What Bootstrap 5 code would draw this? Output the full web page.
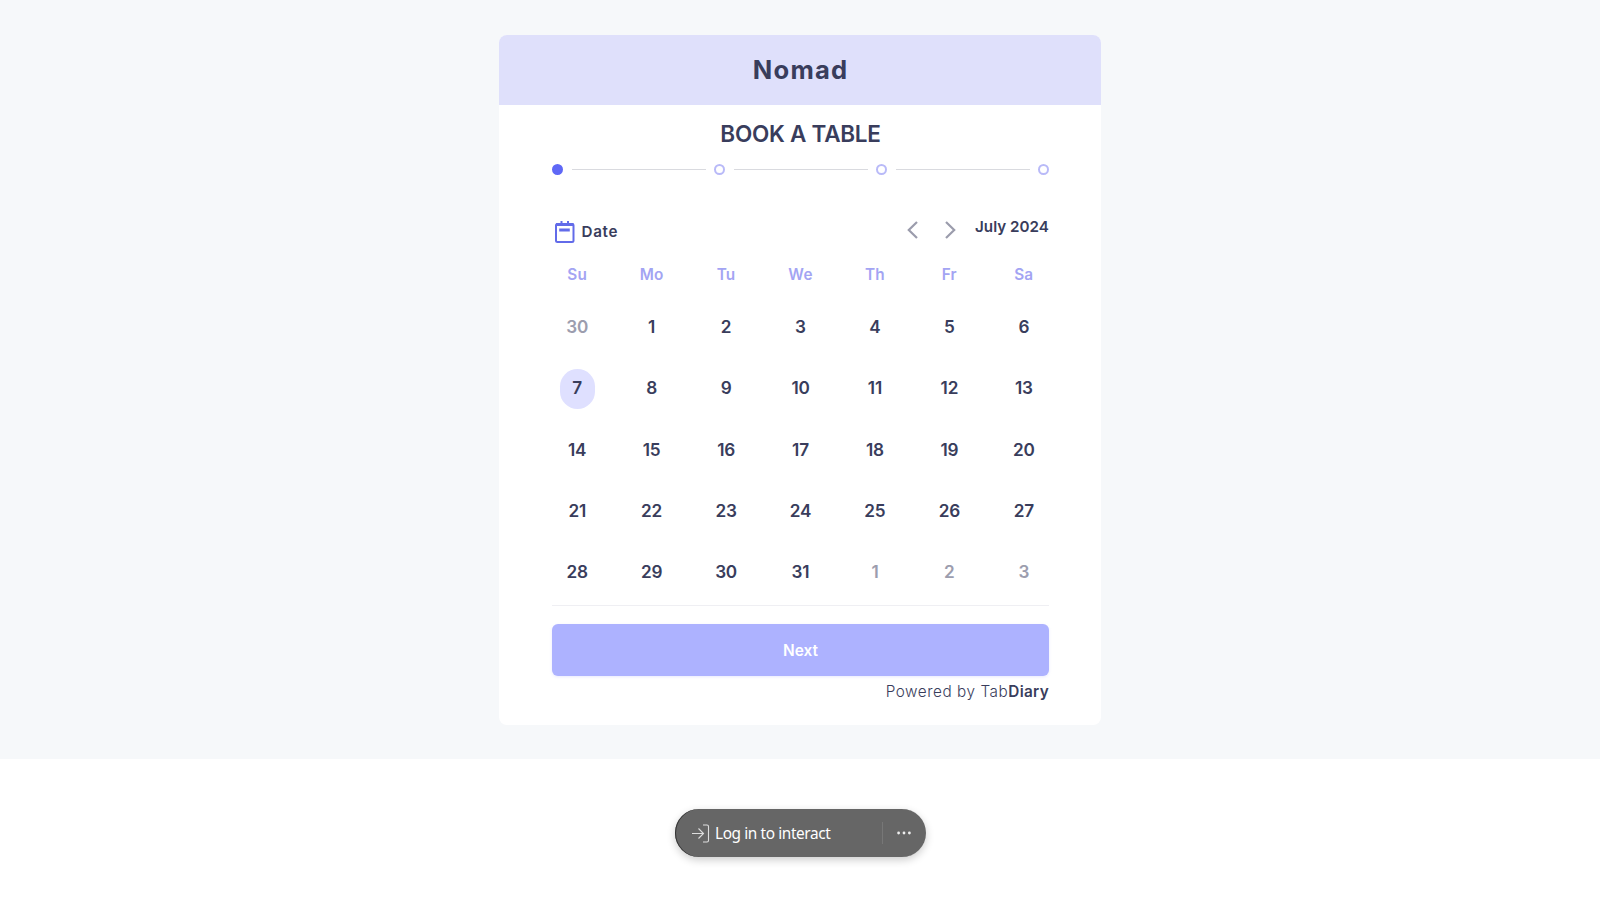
<!DOCTYPE html>
<html lang="en">
<head>
<meta charset="utf-8">
<title>Nomad - Book a table</title>
<link href="https://cdn.jsdelivr.net/npm/bootstrap@5.3.0/dist/css/bootstrap.min.css" rel="stylesheet">
<style>
body{font-family:Inter,"Open Sans",sans-serif;color:#393d5c;height:900px;overflow:hidden;background:#fff}
.stage{height:759px;background:#f6f8fa;padding-top:35px}
.booking{width:602px;height:690px;border-radius:8px;overflow:hidden}
.brand-head{height:70px;background:#dfe0fb;font-size:25.6px;font-weight:700;line-height:70px;letter-spacing:1.2px;text-indent:1.2px}
.inner{padding:0 52px 0 53px}
.title{font-size:22.5px;font-weight:600;line-height:30px;margin-top:14px;letter-spacing:-.25px}
.steps{height:12px;margin-top:14px;gap:8.5px}
.dot{width:11px;height:11px;border:2px solid #b9baf8;border-radius:50%;flex:none}
.dot.on{background:#5f68f6;border-color:#5f68f6}
.bar{height:1px;background:#d9dadf;flex:1}
.tools{height:52px;margin-top:42px;font-size:15.2px;font-weight:600}
.date-icon{margin:4px 0 0 2px}
.date-label{margin-left:6.5px;line-height:20px;padding-top:5px;letter-spacing:.7px}
.arrows{margin:4px 19px 0 0}
.month{line-height:20px;letter-spacing:.02px}
.cal{display:grid;grid-template-columns:repeat(7,1fr);margin:0 -12px 0 -12px;text-align:center}
.cal-head{color:#a3a4f3;font-size:15.3px;font-weight:600;line-height:20px;margin-top:-4px;letter-spacing:.2px}
.days{font-size:17.2px;font-weight:600;margin-top:11.4px;grid-auto-rows:61.25px;letter-spacing:-.2px}
.days span{display:flex;align-items:center;justify-content:center}
.days .out{color:#9c9dae}
.days i{font-style:normal;width:35px;height:40px;border-radius:18px;line-height:38px;background:#dfe0ff;margin-top:2px}
.rule{height:1px;background:#efeff3;margin-top:2.6px}
.next{height:52px;margin-top:18px;padding-top:2px;background:#adb2ff;color:#fff;border-radius:6px;font-size:15.4px;font-weight:600;border:0;box-shadow:0 1px 3px #adb2ff44}
.powered{font-size:15.3px;font-weight:300;line-height:20px;margin-top:6px}
.powered span{letter-spacing:.55px}
.powered b{font-weight:600;letter-spacing:.3px}
.pill{width:251px;height:48px;margin-top:50px;border-radius:24px;background:#666;color:#fff;font:15.4px "Noto Sans",sans-serif;box-shadow:0 3px 8px #0003,inset 1px 0 #333;padding:0 14px 0 17px}
.pill-text{margin-left:5.5px;letter-spacing:-.4px}
.sep{width:1px;height:22px;background:#777}
.dots{margin:0 1px 0 14px}
</style>
</head>
<body>
<main class="stage">
<section class="booking bg-white mx-auto">
<div class="brand-head text-center">Nomad</div>
<div class="inner">
<div class="title text-center">BOOK A TABLE</div>
<div class="steps d-flex align-items-center"><span class="dot on"></span><span class="bar"></span><span class="dot"></span><span class="bar"></span><span class="dot"></span><span class="bar"></span><span class="dot"></span></div>
<div class="tools d-flex align-items-start">
<svg class="date-icon" width="21" height="22" viewBox="0 0 21 22" fill="none" stroke="#626be9"><rect x="2" y="3" width="17.5" height="18" rx="1.5" stroke-width="2"/><path d="M2 3.5H19.5" stroke-width="3"/><path d="M7.5 0V4M14 0V4" stroke-width="2"/><path d="M5.2 9H15.8" stroke-width="3"/></svg>
<span class="date-label">Date</span>
<svg class="arrows ms-auto" width="49" height="18" viewBox="0 0 49 18" fill="none" stroke="#9b9cac" stroke-width="2.2"><path d="M10 1L1.8 9L10 17M39 1L47.2 9L39 17"/></svg>
<span class="month">July 2024</span>
</div>
<div class="cal cal-head"><span>Su</span><span>Mo</span><span>Tu</span><span>We</span><span>Th</span><span>Fr</span><span>Sa</span></div>
<div class="cal days">
<span class="out">30</span><span>1</span><span>2</span><span>3</span><span>4</span><span>5</span><span>6</span>
<span><i>7</i></span><span>8</span><span>9</span><span>10</span><span>11</span><span>12</span><span>13</span>
<span>14</span><span>15</span><span>16</span><span>17</span><span>18</span><span>19</span><span>20</span>
<span>21</span><span>22</span><span>23</span><span>24</span><span>25</span><span>26</span><span>27</span>
<span>28</span><span>29</span><span>30</span><span>31</span><span class="out">1</span><span class="out">2</span><span class="out">3</span>
</div>
<div class="rule"></div>
<button class="next w-100 d-block">Next</button>
<div class="powered text-end"><span>Powered by Tab<b>Diary</b></span></div>
</div>
</section>
</main>
<div class="pill mx-auto d-flex align-items-center">
<svg width="18" height="19" viewBox="0 0 18 19" fill="none" stroke="#ddd" stroke-width="1.1"><path d="M0 9.5H11.5M6.5 4.5L11.5 9.5L6.5 14.5M11 1H15Q16.5 1 16.5 2.5V16.5Q16.5 18 15 18H11"/></svg>
<span class="pill-text">Log in to interact</span>
<span class="sep ms-auto"></span>
<svg class="dots" width="14" height="4" viewBox="0 0 14 4" fill="#eee"><circle cx="1.6" cy="2" r="1.4"/><circle cx="7" cy="2" r="1.4"/><circle cx="12.4" cy="2" r="1.4"/></svg>
</div>
<script src="https://cdn.jsdelivr.net/npm/bootstrap@5.3.0/dist/js/bootstrap.bundle.min.js"></script>
</body>
</html>
